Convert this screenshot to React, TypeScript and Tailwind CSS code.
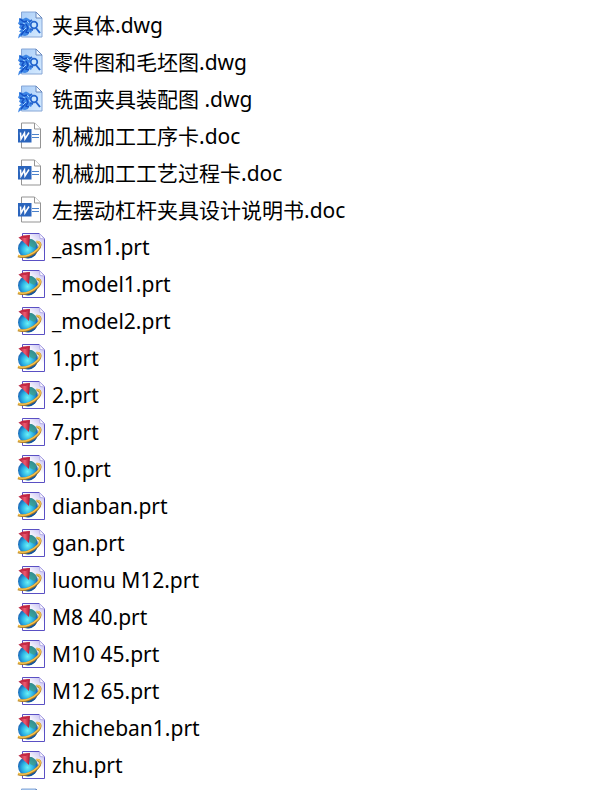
type Kind = "dwg" | "doc" | "prt";

const files: { name: string; kind: Kind }[] = [
  { name: "夹具体.dwg", kind: "dwg" },
  { name: "零件图和毛坯图.dwg", kind: "dwg" },
  { name: "铣面夹具装配图 .dwg", kind: "dwg" },
  { name: "机械加工工序卡.doc", kind: "doc" },
  { name: "机械加工工艺过程卡.doc", kind: "doc" },
  { name: "左摆动杠杆夹具设计说明书.doc", kind: "doc" },
  { name: "_asm1.prt", kind: "prt" },
  { name: "_model1.prt", kind: "prt" },
  { name: "_model2.prt", kind: "prt" },
  { name: "1.prt", kind: "prt" },
  { name: "2.prt", kind: "prt" },
  { name: "7.prt", kind: "prt" },
  { name: "10.prt", kind: "prt" },
  { name: "dianban.prt", kind: "prt" },
  { name: "gan.prt", kind: "prt" },
  { name: "luomu M12.prt", kind: "prt" },
  { name: "M8 40.prt", kind: "prt" },
  { name: "M10 45.prt", kind: "prt" },
  { name: "M12 65.prt", kind: "prt" },
  { name: "zhicheban1.prt", kind: "prt" },
  { name: "zhu.prt", kind: "prt" },
];

function DwgIcon() {
  return (
    <svg viewBox="0 0 28 28" className="size-7 shrink-0" aria-hidden="true">
      <defs>
        <linearGradient id="dwg-sheet" x1="0" y1="0" x2="1" y2="1">
          <stop offset="0" stopColor="#a9cdf8" />
          <stop offset="1" stopColor="#d6ebff" />
        </linearGradient>
      </defs>
      <path d="M4.500 1h14.500l6 6v19h-20.500z" fill="url(#dwg-sheet)" stroke="#86a6d6" />
      <path d="M19 1v6h6z" fill="#f3f9ff" stroke="#6687bd" />
      <path d="M2 7l4 1 3-1.500 3 1.500 2 2-1 2 1 2-2 1 1 3 2 2-1 2-2-1-1 3-3 1-3-.5-4 3 1-4 2-2-2-1 2-2-2-2 1-2-2-2 1-2z" fill="#3d86e6" />
      <path d="M3 8l4 3 3-1M3 13l4 1-2 3 3 2-4 5M9 13l2 4-2 4 3 1" fill="none" stroke="#1450c4" strokeWidth="1.500" />
      <path d="M6 12l2 1M6 20l3-3M10 10l2 2" stroke="#9fd0ff" />
      <circle cx="17" cy="14" r="3.300" fill="#c7e3fd" stroke="#2566cf" strokeWidth="1.700" />
      <path d="M12 11l3-2M19 17l4 5M13 18l3 1" fill="none" stroke="#2566cf" strokeWidth="2" />
    </svg>
  );
}

function DocIcon() {
  return (
    <svg viewBox="0 0 28 28" className="size-7 shrink-0" aria-hidden="true">
      <path d="M4.500 1h13l6 6v19h-19z" fill="#fefefe" stroke="#949494" />
      <path d="M17.500 1v6h6" fill="#fff" stroke="#949494" />
      <path d="M15 12.500h7M15 15.500h7" stroke="#4c82cb" strokeWidth="1.200" />
      <rect x="1" y="7" width="13.500" height="13.500" fill="#2b65bd" />
      <path d="M3.500 10.500l.5 6.500 3.500-6 .5 6 4-6.500" fill="none" stroke="#fff" strokeWidth="1.500" />
    </svg>
  );
}

function PrtIcon() {
  return (
    <svg viewBox="0 0 28 28" className="size-7 shrink-0" aria-hidden="true">
      <defs>
        <radialGradient id="prt-globe" cx="48%" cy="55%" r="55%">
          <stop offset="0" stopColor="#6cf0f6" />
          <stop offset=".5" stopColor="#2bb2e4" />
          <stop offset="1" stopColor="#1553ac" />
        </radialGradient>
        <linearGradient id="prt-sheet" x1="1" y1="0" x2=".4" y2=".8">
          <stop offset="0" stopColor="#b9b1ee" />
          <stop offset=".6" stopColor="#fff" />
        </linearGradient>
        <linearGradient id="prt-cone" x1="0" y1="0" x2="1" y2="0">
          <stop offset="0" stopColor="#a01838" />
          <stop offset=".55" stopColor="#ee5a70" />
          <stop offset="1" stopColor="#a81230" />
        </linearGradient>
      </defs>
      <path d="M5.500 .5h17l5 5v22h-22z" fill="url(#prt-sheet)" stroke="#5a50c4" />
      <path d="M22.500 .5l.5 5 4.500 .5z" fill="#fff" stroke="#b5adea" />
      <circle cx="11" cy="15.500" r="10" fill="url(#prt-globe)" />
      <path d="M12 6c4-.5 7 2 8 6l-3 3-4-2z" fill="#3f9f86" opacity=".75" />
      <path d="M6 24c5 3 12 1 14.500-6-4 3-8.500 5-14.500 6z" fill="#17488a" opacity=".8" />
      <path d="M19.500 9c4.500 0 5 4 1 8S8 25.500 1 23" fill="none" stroke="#b27d22" strokeWidth="2.600" />
      <path d="M19.500 8.500c4.500 0 5 4 1 8S8 25 1 22.500" fill="none" stroke="#f4c451" strokeWidth="1.500" />
      <path d="M1.500 4.500l11.500-2.500-1 12z" fill="url(#prt-cone)" />
      <path d="M1.500 4.500L6 2.500l7-.5-4 3z" fill="#c42642" />
    </svg>
  );
}

function FileIcon({ kind }: { kind: Kind }) {
  if (kind === "dwg") return <DwgIcon />;
  if (kind === "doc") return <DocIcon />;
  return <PrtIcon />;
}

export default function App() {
  return (
    <main className="h-screen overflow-hidden bg-white pt-1.5 pl-[17px] font-['Noto_Sans','Noto_Sans_CJK_SC',sans-serif] text-[21px] text-black">
      <ul>
        {files.map((file) => (
          <li key={file.name} className="flex h-[37px] items-center gap-[7px]">
            <FileIcon kind={file.kind} />
            <span className="whitespace-pre leading-7">{file.name}</span>
          </li>
        ))}
        <li className="flex h-[37px] items-center" aria-hidden="true">
          <DwgIcon />
        </li>
      </ul>
    </main>
  );
}
